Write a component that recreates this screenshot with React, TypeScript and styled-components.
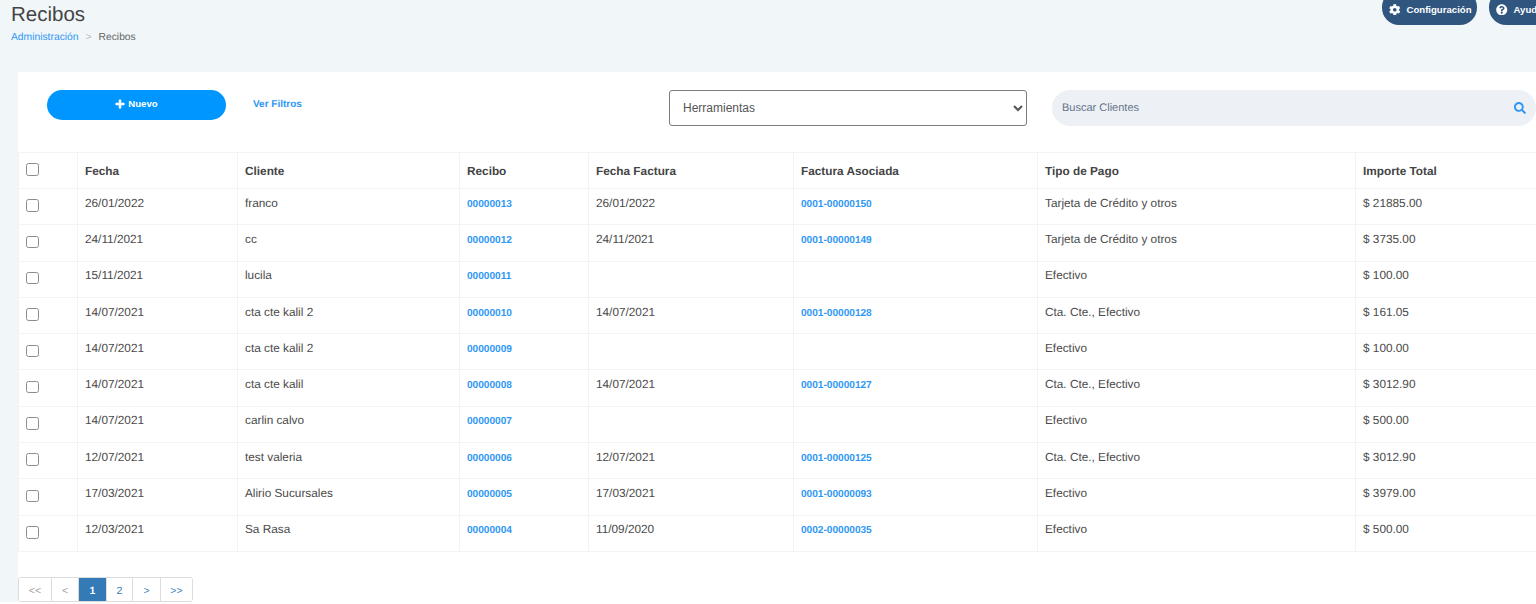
import { createGlobalStyle, styled } from 'styled-components'
import { FaCog, FaPlus, FaQuestionCircle, FaSearch } from 'react-icons/fa'

const GlobalStyle = createGlobalStyle`
  html, body {
    margin: 0;
    padding: 0;
    background: #fff;
    overflow: hidden;
  }
  * {
    box-sizing: border-box;
  }
`

const Page = styled.div`
  width: 1536px;
  height: 602px;
  overflow: hidden;
  background: #f1f6f9;
  color: #4a4a4a;
  font-family: 'Liberation Sans', Arial, sans-serif;
  font-size: 11.8px;
  text-rendering: geometricPrecision;
`

const Header = styled.header`
  height: 72px;
  display: flex;
  justify-content: space-between;
  padding-left: 11px;
`

const TitleBlock = styled.div`
  padding-top: 2px;
`

const Title = styled.h1`
  margin: 0;
  font-size: 20.5px;
  line-height: 26px;
  font-weight: 400;
  color: #444;
`

const Breadcrumb = styled.div`
  display: flex;
  gap: 7px;
  margin-top: 3px;
  font-size: 10.3px;
  line-height: 14px;
  color: #666;
`

const Crumb = styled.a`
  color: #2e97f5;
`

const Separator = styled.span`
  color: #bbb;
`

const HeaderActions = styled.div`
  display: flex;
  gap: 12px;
  margin-top: -10px;
  flex: none;
  width: 154px;
`

const PillButton = styled.button<{ $width: number }>`
  flex: none;
  width: ${(p) => p.$width}px;
  height: 35px;
  display: flex;
  align-items: center;
  gap: 6px;
  padding: 4px 0 0 7px;
  border: 0;
  border-radius: 17px;
  background: #305680;
  color: #fff;
  font-family: inherit;
  font-size: 9.6px;
  font-weight: 700;
  white-space: nowrap;
  svg {
    font-size: 11.5px;
    flex: none;
  }
`

const Card = styled.main`
  margin-left: 18px;
  height: 530px;
  background: #fff;
  display: flex;
  flex-direction: column;
`

const Toolbar = styled.div`
  height: 80px;
  flex: none;
  display: flex;
  align-items: flex-start;
  padding: 18px 0 0 29px;
`

const NewButton = styled.button`
  width: 179px;
  height: 30px;
  display: flex;
  align-items: center;
  justify-content: center;
  gap: 3px;
  padding: 0 0 3px;
  border: 0;
  border-radius: 15px;
  background: #0096ff;
  color: #fff;
  font-family: inherit;
  font-size: 9.6px;
  font-weight: 700;
  svg {
    font-size: 10px;
    stroke: currentColor;
    stroke-width: 30;
  }
`

const FilterLink = styled.a`
  width: 416px;
  margin-left: 27px;
  line-height: 30px;
  font-size: 10px;
  font-weight: 700;
  color: #2e97f5;
`

const ToolSelect = styled.select`
  width: 358px;
  height: 36px;
  padding: 0 9px;
  border: 1px solid #7d7d7d;
  border-radius: 3px;
  background: #fff;
  color: #555;
  font-family: inherit;
  font-size: 12px;
`

const SearchBox = styled.div`
  width: 484px;
  height: 36px;
  margin-left: 25px;
  display: flex;
  align-items: center;
  justify-content: space-between;
  padding: 0 10px;
  border-radius: 18px;
  background: #edf1f5;
  color: #64748b;
  font-size: 11px;
  svg {
    color: #2e97f5;
    font-size: 12px;
  }
`

const Table = styled.table`
  width: 1518px;
  flex: none;
  table-layout: fixed;
  border-collapse: collapse;
`

const HeadCell = styled.th`
  height: 36px;
  padding: 0 7px;
  border: 1px solid #f1f3f5;
  text-align: left;
  font-size: 11.8px;
  font-weight: 700;
  color: #444;
`

const Row = styled.tr`
  height: 36.3px;
`

const Cell = styled.td`
  padding: 0 7px 8px;
  border: 1px solid #f1f3f5;
  color: #4a4a4a;
`

const CheckCell = styled.td`
  padding: 0 0 2px 7px;
  border: 1px solid #f1f3f5;
`

const CheckHead = styled.th`
  padding: 0 0 2px 7px;
  border: 1px solid #f1f3f5;
  text-align: left;
`

const Box = styled.input`
  display: block;
  appearance: none;
  width: 12.5px;
  height: 12.5px;
  margin: 0;
  border: 1px solid #8c8c8c;
  border-radius: 2.5px;
  background: #fff;
`

const DocLink = styled.a`
  color: #2e97f5;
  font-size: 10.1px;
  font-weight: 700;
`

const Pager = styled.nav`
  display: flex;
  width: fit-content;
  margin-top: 25px;
  border: 1px solid #ddd;
  border-radius: 3px;
  overflow: hidden;
`

const PageItem = styled.a<{ $width: number; $active?: boolean }>`
  width: ${(p) => p.$width}px;
  height: 27px;
  display: flex;
  align-items: center;
  justify-content: center;
  border-left: 1px solid #ddd;
  background: ${(p) => (p.$active ? '#337ab7' : '#fff')};
  color: ${(p) => (p.$active ? '#fff' : '#337ab7')};
  font-size: 10.5px;
  font-weight: ${(p) => (p.$active ? 700 : 400)};
  &:first-child {
    border-left: 0;
  }
`

const MutedItem = styled(PageItem)`
  color: #999;
`

const columns = [59, 160, 222, 129, 205, 244, 318, 181]
const headers = ['Fecha', 'Cliente', 'Recibo', 'Fecha Factura', 'Factura Asociada', 'Tipo de Pago', 'Importe Total']

const rows = [
  ['26/01/2022', 'franco', '00000013', '26/01/2022', '0001-00000150', 'Tarjeta de Crédito y otros', '$ 21885.00'],
  ['24/11/2021', 'cc', '00000012', '24/11/2021', '0001-00000149', 'Tarjeta de Crédito y otros', '$ 3735.00'],
  ['15/11/2021', 'lucila', '00000011', '', '', 'Efectivo', '$ 100.00'],
  ['14/07/2021', 'cta cte kalil 2', '00000010', '14/07/2021', '0001-00000128', 'Cta. Cte., Efectivo', '$ 161.05'],
  ['14/07/2021', 'cta cte kalil 2', '00000009', '', '', 'Efectivo', '$ 100.00'],
  ['14/07/2021', 'cta cte kalil', '00000008', '14/07/2021', '0001-00000127', 'Cta. Cte., Efectivo', '$ 3012.90'],
  ['14/07/2021', 'carlin calvo', '00000007', '', '', 'Efectivo', '$ 500.00'],
  ['12/07/2021', 'test valeria', '00000006', '12/07/2021', '0001-00000125', 'Cta. Cte., Efectivo', '$ 3012.90'],
  ['17/03/2021', 'Alirio Sucursales', '00000005', '17/03/2021', '0001-00000093', 'Efectivo', '$ 3979.00'],
  ['12/03/2021', 'Sa Rasa', '00000004', '11/09/2020', '0002-00000035', 'Efectivo', '$ 500.00'],
]

export default function App() {
  return (
    <Page>
      <GlobalStyle />
      <Header>
        <TitleBlock>
          <Title>Recibos</Title>
          <Breadcrumb>
            <Crumb>Administración</Crumb>
            <Separator>&gt;</Separator>
            <span>Recibos</span>
          </Breadcrumb>
        </TitleBlock>
        <HeaderActions>
          <PillButton $width={95}>
            <FaCog /> Configuración
          </PillButton>
          <PillButton $width={95}>
            <FaQuestionCircle /> Ayuda
          </PillButton>
        </HeaderActions>
      </Header>
      <Card>
        <Toolbar>
          <NewButton>
            <FaPlus /> Nuevo
          </NewButton>
          <FilterLink>Ver Filtros</FilterLink>
          <ToolSelect defaultValue="Herramientas">
            <option>Herramientas</option>
          </ToolSelect>
          <SearchBox>
            Buscar Clientes
            <FaSearch />
          </SearchBox>
        </Toolbar>
        <Table>
          <colgroup>
            {columns.map((width, i) => (
              <col key={i} width={width} />
            ))}
          </colgroup>
          <thead>
            <tr>
              <CheckHead>
                <Box type="checkbox" />
              </CheckHead>
              {headers.map((label) => (
                <HeadCell key={label}>{label}</HeadCell>
              ))}
            </tr>
          </thead>
          <tbody>
            {rows.map((row) => (
              <Row key={row[2]}>
                <CheckCell>
                  <Box type="checkbox" />
                </CheckCell>
                {row.map((value, i) => (
                  <Cell key={i}>{i === 2 || i === 4 ? <DocLink>{value}</DocLink> : value}</Cell>
                ))}
              </Row>
            ))}
          </tbody>
        </Table>
        <Pager>
          <MutedItem $width={32}>&lt;&lt;</MutedItem>
          <MutedItem $width={27}>&lt;</MutedItem>
          <PageItem $width={28} $active>
            1
          </PageItem>
          <PageItem $width={26}>2</PageItem>
          <PageItem $width={28}>&gt;</PageItem>
          <PageItem $width={32}>&gt;&gt;</PageItem>
        </Pager>
      </Card>
    </Page>
  )
}
